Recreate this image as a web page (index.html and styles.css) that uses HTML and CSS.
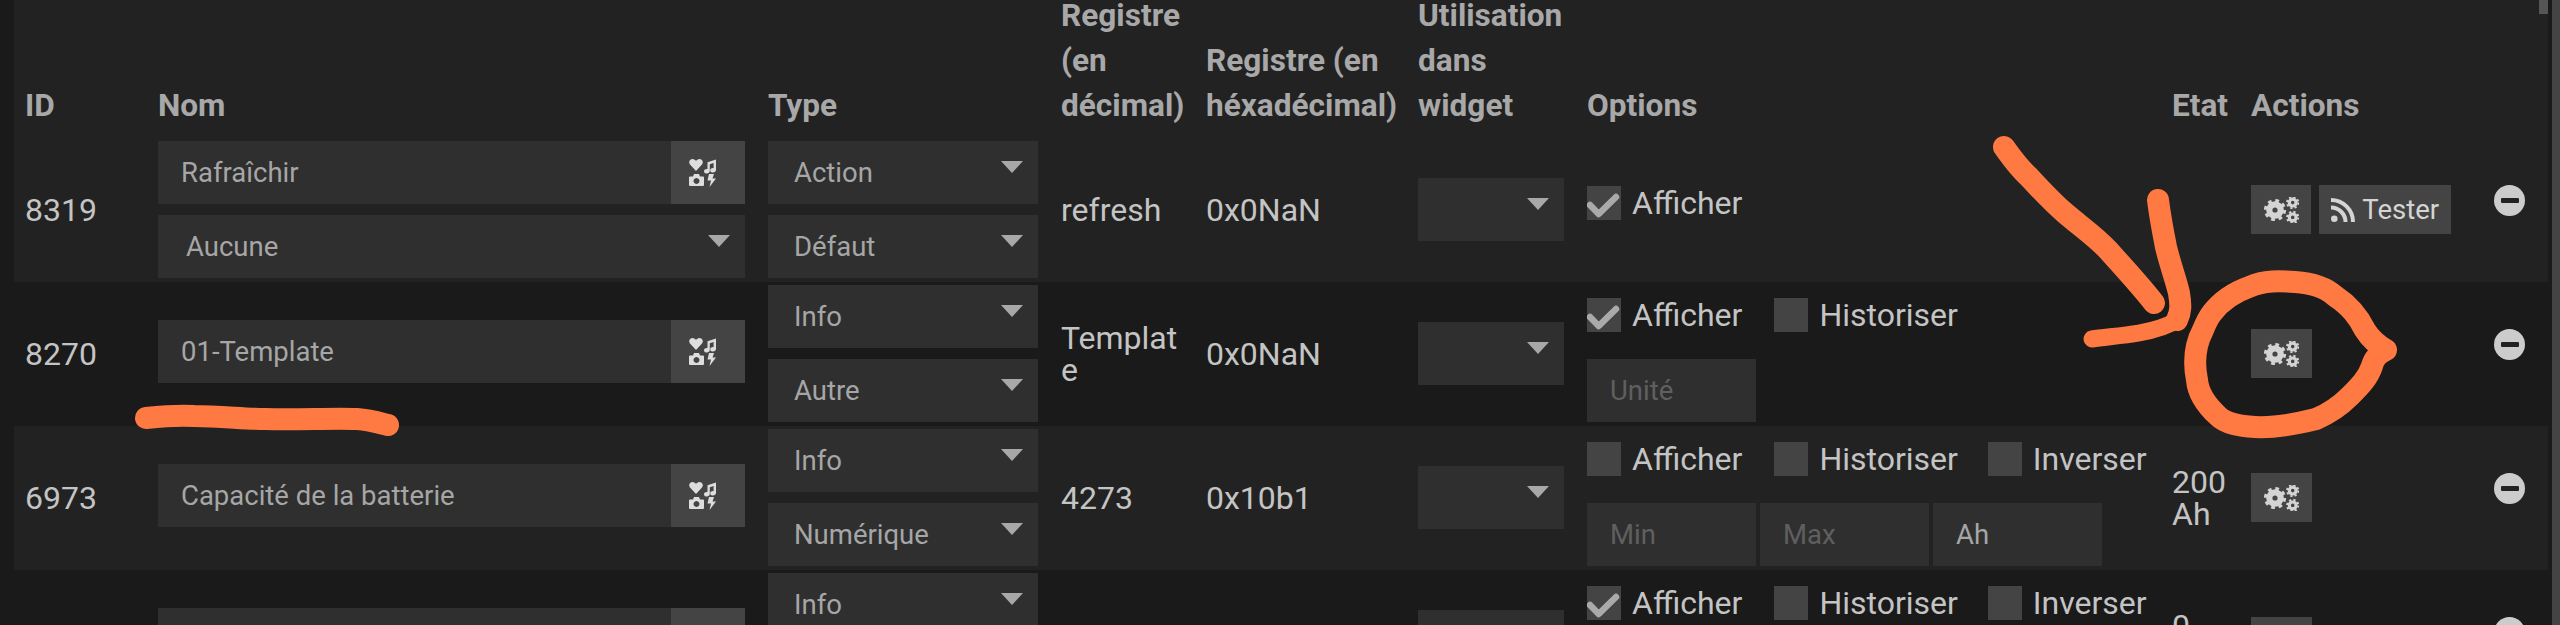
FILE: index.html
```html
<!DOCTYPE html>
<html lang="fr">
<head>
    <meta charset="UTF-8">
    <title>Commandes</title>
    <link rel="stylesheet" href="styles.css">
</head>
<body>
    <svg class="defs" width="0" height="0">
        <symbol id="i-icons" viewBox="0 0 27 28">
            <path d="M7 12 L1 5.5 C-1 3 1 0 3.5 0 C5 0 6.5 1 7 2 C7.5 1 9 0 10.5 0 C13 0 15 3 13 5.5 Z"/>
            <path d="M18.5 3.2 L27 .5 V11 C27 12.6 25.6 13.5 24 13.5 C22.4 13.5 21.2 12.6 21.2 11.2 C21.2 9.8 22.6 9 24 9 L24.6 9 V4 L20.8 5.2 V12 C20.8 13.6 19.4 14.5 17.8 14.5 C16.2 14.5 15 13.6 15 12.2 C15 10.8 16.4 10 17.8 10 L18.5 10 Z"/>
            <path fill-rule="evenodd" d="M1 17.5 H4 L5 15 H10 L11 17.5 H14 Q15 17.5 15 18.5 V26 Q15 27 14 27 H1 Q0 27 0 26 V18.5 Q0 17.5 1 17.5 Z M7.5 19 a3 3 0 1 0 .01 0 Z"/>
            <path d="M20 15 H25 L23.5 19.5 H27 L20.5 28 L22 21.5 H18.5 Z"/>
        </symbol>
        <symbol id="i-cogs" viewBox="0 0 35 26">
            <g fill="none" stroke="currentColor">
                <circle cx="11" cy="13" r="5.7" stroke-width="6.2"/>
                <circle cx="11" cy="13" r="9.6" stroke-width="3" stroke-dasharray="3.75 3.79"/>
                <circle cx="28.7" cy="5.6" r="3.4" stroke-width="3.2"/>
                <circle cx="28.7" cy="5.6" r="5.6" stroke-width="2" stroke-dasharray="2.18 2.22"/>
                <circle cx="28.7" cy="20.4" r="3.4" stroke-width="3.2"/>
                <circle cx="28.7" cy="20.4" r="5.6" stroke-width="2" stroke-dasharray="2.18 2.22"/>
            </g>
        </symbol>
        <symbol id="i-rss" viewBox="0 0 24 24">
            <circle cx="3.3" cy="20.7" r="3.3"/>
            <path fill="none" stroke="currentColor" stroke-width="4" d="M0 9.5 A14.5 14.5 0 0 1 14.5 24 M0 2 A22 22 0 0 1 22 24"/>
        </symbol>
        <symbol id="i-check" viewBox="0 0 34 33">
            <path fill="none" stroke="currentColor" stroke-width="6.5" stroke-linecap="round" stroke-linejoin="round" d="M3 19 L11.7 28 L29 11"/>
        </symbol>
    </svg>

    <div class="panel">
        <table class="cmd-table">
            <colgroup>
                <col class="col-id"><col class="col-name"><col class="col-type"><col class="col-dec"><col class="col-hex">
                <col class="col-widget"><col class="col-options"><col class="col-state"><col class="col-actions"><col class="col-remove">
            </colgroup>
            <thead>
                <tr>
                    <th>ID</th>
                    <th>Nom</th>
                    <th class="cell-type">Type</th>
                    <th>Registre (en décimal)</th>
                    <th>Registre (en héxadécimal)</th>
                    <th>Utilisation dans widget</th>
                    <th class="cell-options">Options</th>
                    <th>Etat</th>
                    <th>Actions</th>
                    <th></th>
                </tr>
            </thead>
            <tbody>
                <tr>
                    <td>8319</td>
                    <td>
                        <div class="field with-addon">
                            <span class="field-text">Rafraîchir</span>
                            <span class="addon"><svg class="ico-icons"><use href="#i-icons"/></svg></span>
                        </div>
                        <div class="select spaced"><span>Aucune</span></div>
                    </td>
                    <td class="cell-type">
                        <div class="select"><span>Action</span></div>
                        <div class="select spaced"><span>Défaut</span></div>
                    </td>
                    <td class="cell-wrap">refresh</td>
                    <td>0x0NaN</td>
                    <td><div class="select"></div></td>
                    <td class="cell-options">
                        <div class="opt-line">
                            <label class="opt"><span class="box"><svg class="ico-check"><use href="#i-check"/></svg></span>Afficher</label>
                        </div>
                    </td>
                    <td></td>
                    <td>
                        <div class="actions">
                            <span class="btn"><svg class="ico-cogs"><use href="#i-cogs"/></svg></span>
                            <span class="btn btn-test"><svg class="ico-rss"><use href="#i-rss"/></svg>Tester</span>
                        </div>
                    </td>
                    <td><span class="remove"></span></td>
                </tr>
                <tr>
                    <td>8270</td>
                    <td>
                        <div class="field with-addon name-only">
                            <span class="field-text">01-Template</span>
                            <span class="addon"><svg class="ico-icons"><use href="#i-icons"/></svg></span>
                        </div>
                    </td>
                    <td class="cell-type">
                        <div class="select"><span>Info</span></div>
                        <div class="select spaced"><span>Autre</span></div>
                    </td>
                    <td class="cell-wrap">Template</td>
                    <td>0x0NaN</td>
                    <td><div class="select"></div></td>
                    <td class="cell-options">
                        <div class="opt-line">
                            <label class="opt"><span class="box"><svg class="ico-check"><use href="#i-check"/></svg></span>Afficher</label>
                            <label class="opt"><span class="box"></span>Historiser</label>
                        </div>
                        <div class="opt-fields">
                            <div class="field small placeholder">Unité</div>
                        </div>
                    </td>
                    <td></td>
                    <td>
                        <div class="actions">
                            <span class="btn"><svg class="ico-cogs"><use href="#i-cogs"/></svg></span>
                        </div>
                    </td>
                    <td><span class="remove"></span></td>
                </tr>
                <tr>
                    <td>6973</td>
                    <td>
                        <div class="field with-addon name-only">
                            <span class="field-text">Capacité de la batterie</span>
                            <span class="addon"><svg class="ico-icons"><use href="#i-icons"/></svg></span>
                        </div>
                    </td>
                    <td class="cell-type">
                        <div class="select"><span>Info</span></div>
                        <div class="select spaced"><span>Numérique</span></div>
                    </td>
                    <td class="cell-wrap">4273</td>
                    <td>0x10b1</td>
                    <td><div class="select"></div></td>
                    <td class="cell-options">
                        <div class="opt-line">
                            <label class="opt"><span class="box"></span>Afficher</label>
                            <label class="opt"><span class="box"></span>Historiser</label>
                            <label class="opt"><span class="box"></span>Inverser</label>
                        </div>
                        <div class="opt-fields">
                            <div class="field small placeholder">Min</div>
                            <div class="field small placeholder">Max</div>
                            <div class="field small">Ah</div>
                        </div>
                    </td>
                    <td>200 Ah</td>
                    <td>
                        <div class="actions">
                            <span class="btn"><svg class="ico-cogs"><use href="#i-cogs"/></svg></span>
                        </div>
                    </td>
                    <td><span class="remove"></span></td>
                </tr>
                <tr>
                    <td></td>
                    <td>
                        <div class="field with-addon name-only">
                            <span class="field-text"></span>
                            <span class="addon"><svg class="ico-icons"><use href="#i-icons"/></svg></span>
                        </div>
                    </td>
                    <td class="cell-type">
                        <div class="select"><span>Info</span></div>
                        <div class="select spaced"></div>
                    </td>
                    <td></td>
                    <td></td>
                    <td><div class="select"></div></td>
                    <td class="cell-options">
                        <div class="opt-line">
                            <label class="opt"><span class="box"><svg class="ico-check"><use href="#i-check"/></svg></span>Afficher</label>
                            <label class="opt"><span class="box"></span>Historiser</label>
                            <label class="opt"><span class="box"></span>Inverser</label>
                        </div>
                        <div class="opt-fields">
                            <div class="field small"></div>
                        </div>
                    </td>
                    <td>0<br>&nbsp;</td>
                    <td>
                        <div class="actions">
                            <span class="btn"><svg class="ico-cogs"><use href="#i-cogs"/></svg></span>
                        </div>
                    </td>
                    <td><span class="remove"></span></td>
                </tr>
            </tbody>
        </table>
        <div class="scroll-thumb"></div>
    </div>
    <div class="page-scroll"></div>

    <!-- hand drawn annotations on top of the screenshot -->
    <svg class="marker" viewBox="0 0 2560 625" stroke="#ff7a42" stroke-width="22" stroke-linecap="round" stroke-linejoin="round">
        <path d="M146 418 C165 416 180 415 194 416 C220 416 245 419 265 419 C300 420 330 418 357 419 C370 420 380 423 388 425"/>
        <path d="M2004 147 C2012 158 2018 167 2029 177 C2041 190 2052 202 2065 213 C2080 226 2095 236 2108 250 C2124 268 2140 285 2154 303"/>
        <path d="M2158 200 C2160 216 2163 232 2166 247 C2170 264 2176 280 2179 293 C2181 305 2181 312 2177 320"/>
        <path d="M2177 320 C2165 328 2150 331 2139 333 C2122 336 2105 337 2092 339" stroke-width="17"/>
        <path d="M2212 313 C2222 300 2235 292 2249 287 C2265 280 2280 281 2295 282 C2310 283 2325 287 2335 296 C2350 306 2358 316 2365 330 C2370 338 2376 344 2386 350 C2378 354 2374 358 2372 366 C2368 378 2360 386 2350 396 C2340 406 2328 414 2316 419 C2296 424 2275 428 2255 427 C2240 426 2226 424 2218 416 C2205 404 2198 392 2197 380 C2193 360 2195 345 2203 330 C2205 325 2208 318 2212 313 Z"/>
    </svg>
</body>
</html>
```

FILE: styles.css
```css
* {
    box-sizing: border-box;
}
html, body {
    height: 625px;
}
body {
    margin: 0;
    display: flex;
    overflow: hidden;
    background: #1a1a1a;
    color: #c4c4c4;
    font-family: Roboto, "Liberation Sans", sans-serif;
    font-size: 32px;
    line-height: 32px;
}
.defs {
    position: absolute;
}
svg {
    fill: currentColor;
}
.panel {
    position: relative;
    flex: none;
    width: 2534px;
    margin-left: 14px;
    overflow: hidden;
}
.page-scroll {
    flex: none;
    width: 8px;
    margin-left: 4px;
    background: #444;
}
.scroll-thumb {
    position: absolute;
    top: 0;
    right: 0;
    width: 9px;
    height: 14px;
    background: #555;
}

/* table */
.cmd-table {
    width: 2534px;
    /* the list is scrolled a little, first header line is cut */
    margin-top: -7px;
    table-layout: fixed;
    border-collapse: collapse;
}
.col-id { width: 133px; }
.col-name { width: 609px; }
.col-type { width: 294px; }
.col-dec { width: 145px; }
.col-hex { width: 212px; }
.col-widget { width: 168px; }
.col-options { width: 586px; }
.col-state { width: 79px; }
.col-actions { width: 222px; }
.col-remove { width: 86px; }

th {
    height: 145px;
    padding: 0 11px 10px;
    background: #222;
    color: #a8a8a8;
    font-size: 31.6px;
    font-weight: 700;
    line-height: 45px;
    text-align: left;
    vertical-align: bottom;
}
td {
    height: 144px;
    padding: 3px 11px 4px;
    vertical-align: middle;
}
tbody tr:nth-child(odd) {
    background: #222;
}
th.cell-type, td.cell-type {
    padding-left: 12px;
    padding-right: 12px;
}
th.cell-options, td.cell-options {
    padding-left: 12px;
}
.cell-wrap {
    word-break: break-all;
}

/* form controls */
.field, .select {
    height: 63px;
    background: #2f2f2f;
    color: #a6a6a6;
    font-size: 27.5px;
}
.field {
    display: flex;
    align-items: center;
    padding-left: 23px;
}
.with-addon {
    justify-content: space-between;
}
.name-only {
    margin-bottom: 4px;
}
.addon {
    display: flex;
    align-items: center;
    justify-content: center;
    width: 74px;
    height: 100%;
    background: #444;
    color: #ddd;
    padding-right: 11px;
}
.ico-icons {
    width: 27px;
    height: 28px;
}
.select {
    display: flex;
    align-items: center;
    justify-content: space-between;
    padding-left: 28px;
}
.cell-type .select {
    padding-left: 26px;
}
.select::after {
    content: "";
    flex: none;
    align-self: flex-start;
    margin: 20px 15px 0 auto;
    border-top: 12px solid #a8a8a8;
    border-left: 11px solid transparent;
    border-right: 11px solid transparent;
}
.spaced {
    margin-top: 11px;
}

/* options column */
.opt-line {
    display: flex;
    gap: 30px;
    padding: 13px 0 27px;
}
.opt {
    display: flex;
    align-items: center;
    gap: 11px;
    height: 34px;
}
.opt:first-child {
    margin-right: 2px;
}
.box {
    flex: none;
    width: 34px;
    height: 34px;
    background: #444;
    color: #aaa;
}
.ico-check {
    display: block;
    width: 34px;
    height: 33px;
}
.opt-fields {
    display: flex;
    gap: 4px;
}
.small {
    width: 169px;
}
.placeholder {
    color: #5f5f5f;
}

/* actions column */
.actions {
    display: flex;
    gap: 8px;
}
.btn {
    display: flex;
    align-items: center;
    justify-content: center;
    width: 61px;
    height: 49px;
    background: #444;
    color: #d4d4d4;
    font-size: 27.5px;
}
.btn-test {
    gap: 7px;
    width: 133px;
}
.ico-cogs {
    width: 35px;
    height: 26px;
}
.ico-rss {
    width: 24px;
    height: 24px;
}
.remove {
    display: block;
    position: relative;
    width: 31px;
    height: 31px;
    margin: 0 0 18px 21px;
    border-radius: 50%;
    background: #ccc;
}
.remove::after {
    content: "";
    position: absolute;
    top: 13px;
    left: 7px;
    width: 18px;
    height: 5px;
    border-radius: 1px;
    background: #222;
}

.marker {
    position: absolute;
    top: 0;
    left: 0;
    width: 2560px;
    height: 625px;
    fill: none;
}
```
